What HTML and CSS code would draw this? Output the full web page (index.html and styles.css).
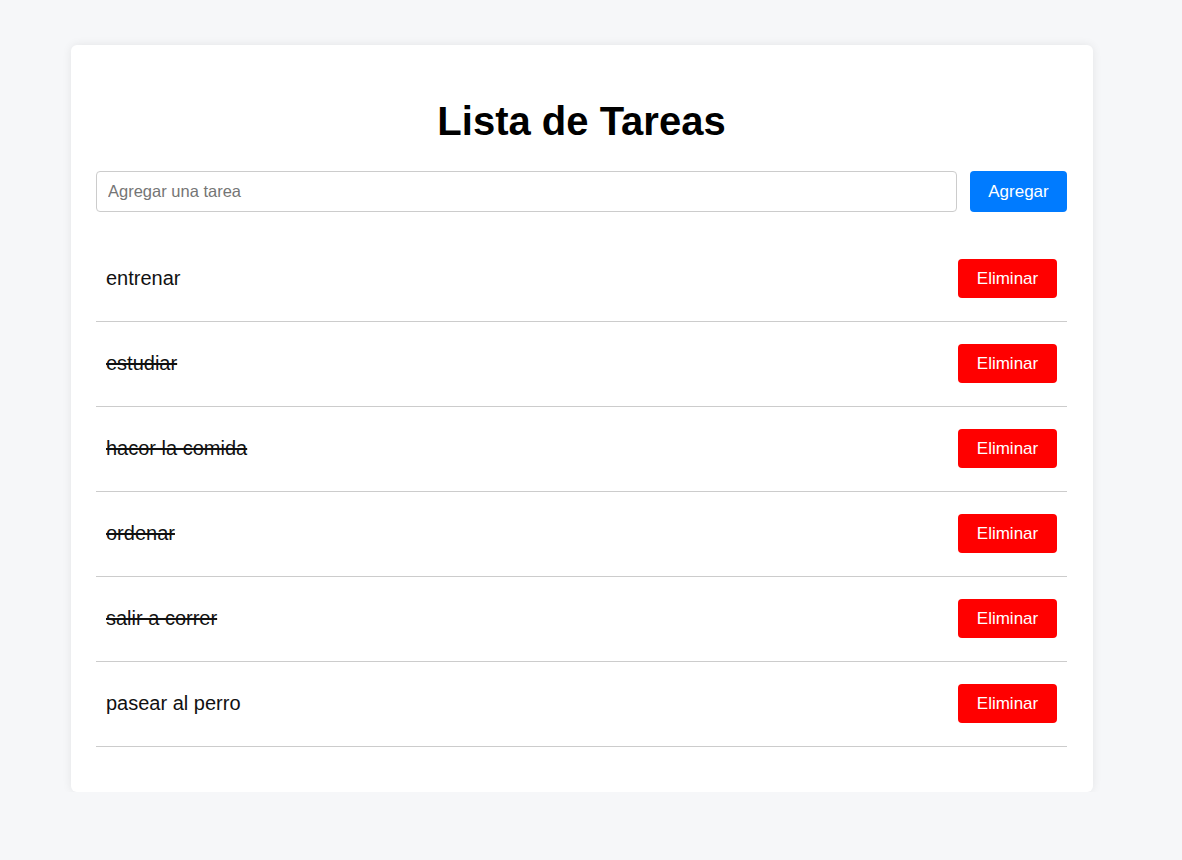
FILE: index.html
```html
<!DOCTYPE html>
<html lang="es">
<head>
<meta charset="utf-8">
<title>Lista de Tareas</title>
<link rel="stylesheet" href="styles.css">
</head>
<body>
<div class="card">
  <h1 class="title">Lista de Tareas</h1>
  <div class="add-row">
    <input class="task-input" type="text" placeholder="Agregar una tarea">
    <button class="btn btn-add">Agregar</button>
  </div>
  <ul class="task-list">
    <li class="task"><span class="task-text">entrenar</span><button class="btn btn-delete">Eliminar</button></li>
    <li class="task done"><span class="task-text">estudiar</span><button class="btn btn-delete">Eliminar</button></li>
    <li class="task done"><span class="task-text">hacor la comida</span><button class="btn btn-delete">Eliminar</button></li>
    <li class="task done"><span class="task-text">ordenar</span><button class="btn btn-delete">Eliminar</button></li>
    <li class="task done"><span class="task-text">salir a correr</span><button class="btn btn-delete">Eliminar</button></li>
    <li class="task"><span class="task-text">pasear al perro</span><button class="btn btn-delete">Eliminar</button></li>
  </ul>
</div>
</body>
</html>
```

FILE: styles.css
```css
html, body {
  margin: 0;
  background: #f6f7f9;
}
body {
  padding: 45px 18px 0 0;
  font-family: "Liberation Sans", Arial, sans-serif;
  color: #111;
}
.card {
  box-sizing: border-box;
  width: 1022px;
  margin: 0 auto;
  background: #fff;
  border-radius: 6px;
  padding: 25px 26px 25px 25px;
  box-shadow: 0 0 10px rgba(0, 0, 0, 0.08);
}
.title {
  margin: 28px 0 27px;
  text-align: center;
  font-size: 40px;
  font-weight: bold;
  line-height: 46px;
  color: #000;
}
.add-row {
  display: flex;
  gap: 13px;
}
.task-input {
  flex: 1;
  box-sizing: border-box;
  height: 41px;
  border: 1px solid #ccc;
  border-radius: 4px;
  padding: 0 11px;
  font-family: "Liberation Sans", Arial, sans-serif;
  font-size: 16.5px;
  color: #222;
  outline: none;
}
.task-input::placeholder {
  color: #757575;
}
.btn {
  border: none;
  border-radius: 4px;
  color: #fff;
  font-family: "Liberation Sans", Arial, sans-serif;
  font-size: 17px;
  cursor: pointer;
}
.btn-add {
  width: 97px;
  height: 41px;
  background: #007bff;
}
.task-list {
  list-style: none;
  margin: 25px 0 20px;
  padding: 0;
}
.task {
  display: flex;
  align-items: center;
  justify-content: space-between;
  padding: 22px 10px 23px;
  border-bottom: 1px solid #cccccc;
}
.task-text {
  font-size: 20px;
  color: #111;
}
.done .task-text {
  text-decoration: line-through;
}
.btn-delete {
  width: 99px;
  height: 39px;
  background: #ff0000;
}
```
